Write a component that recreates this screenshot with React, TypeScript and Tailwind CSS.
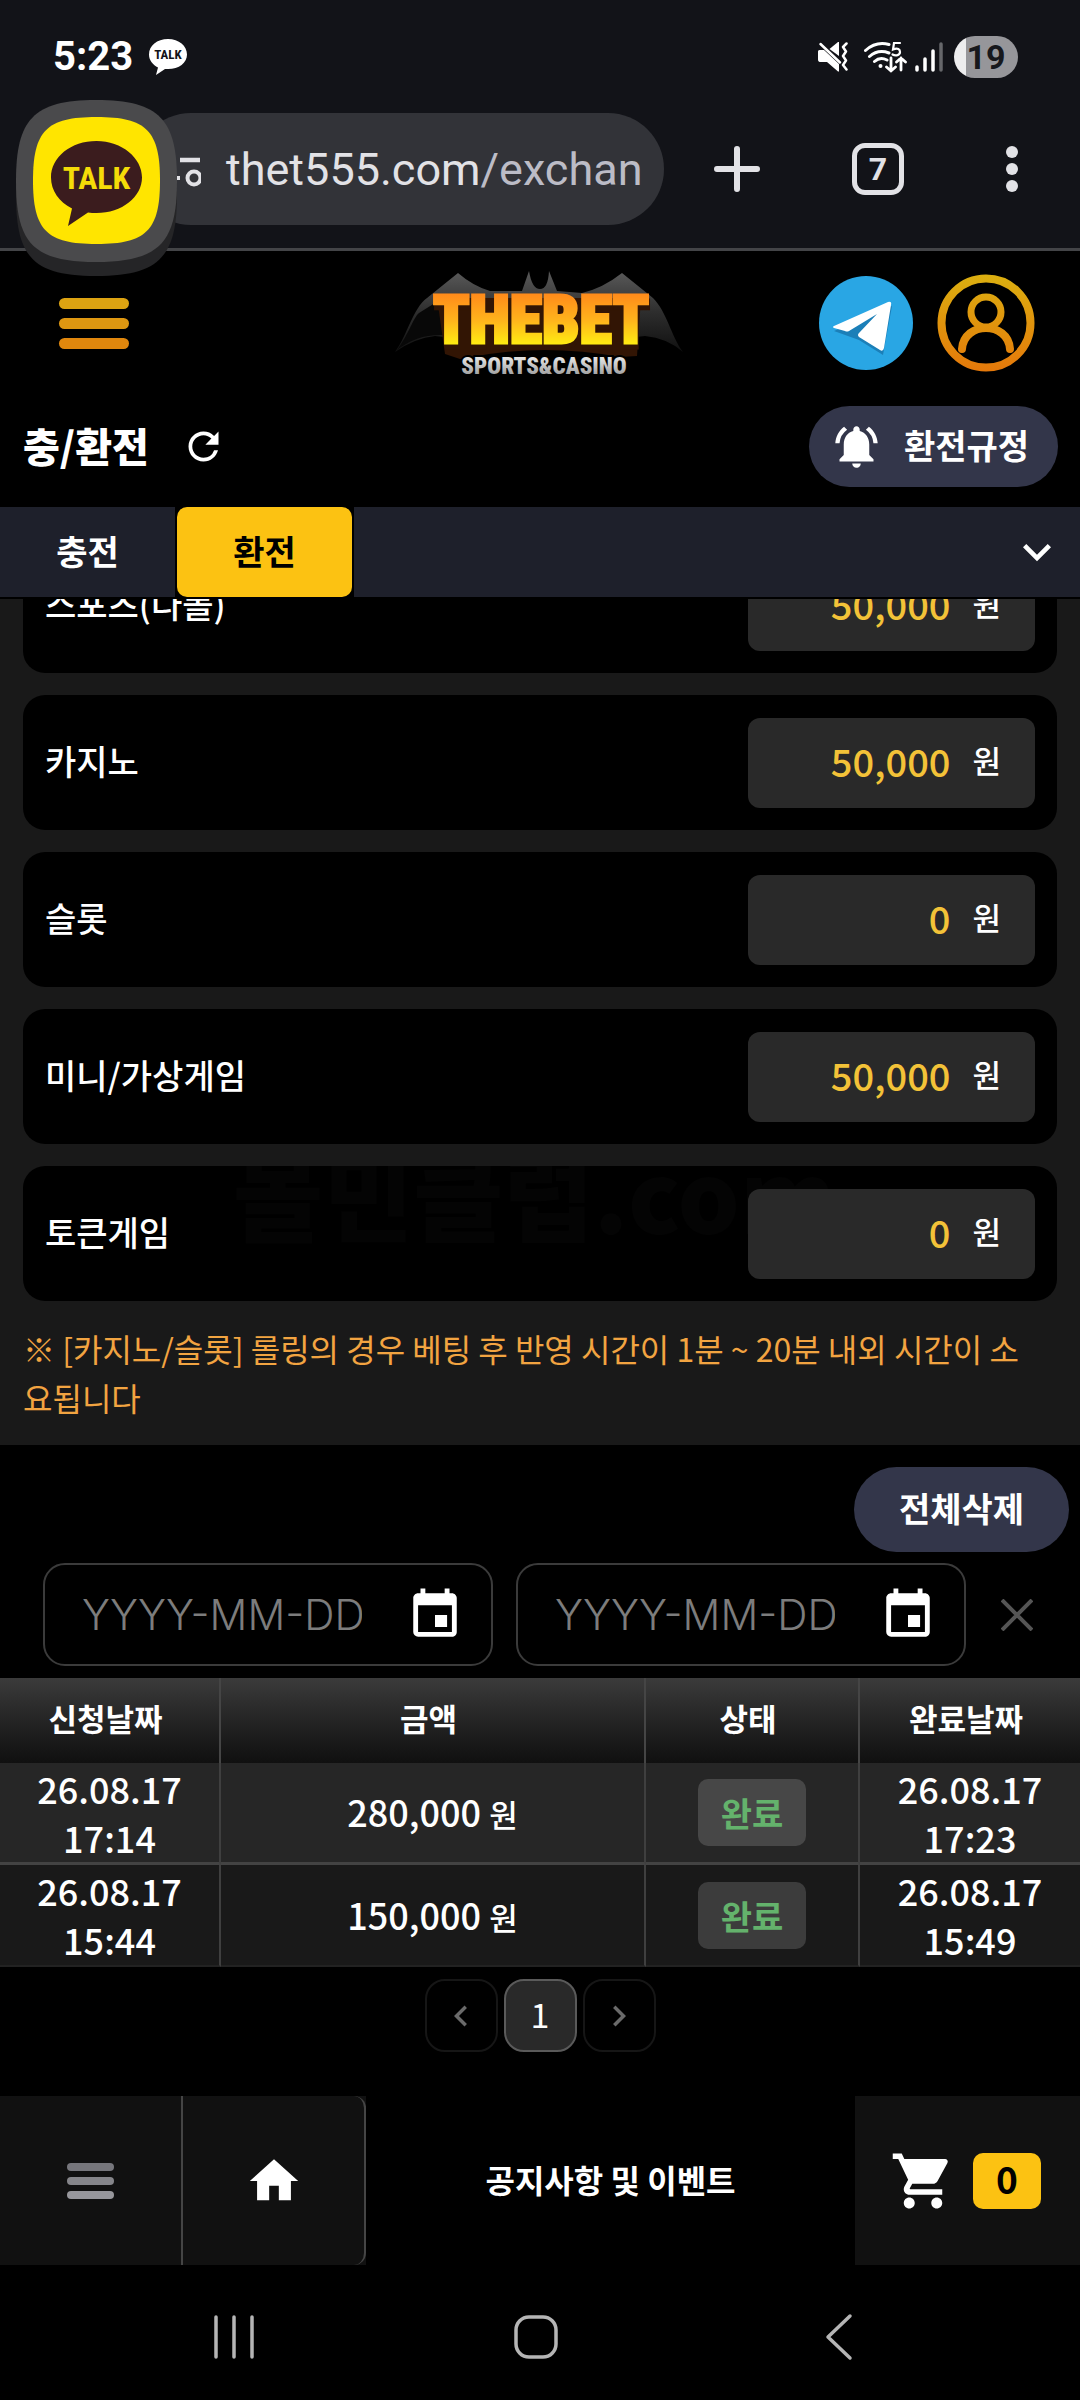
import {
  MdChevronLeft,
  MdChevronRight,
  MdEvent,
  MdExpandMore,
  MdHome,
  MdNotificationsActive,
  MdRefresh,
  MdShoppingCart,
} from "react-icons/md";

const rollings = [
  { label: "스포츠(다폴)", value: "50,000" },
  { label: "카지노", value: "50,000" },
  { label: "슬롯", value: "0" },
  { label: "미니/가상게임", value: "50,000" },
  { label: "토큰게임", value: "0", watermark: true },
];

const history = [
  { asked: ["26.08.17", "17:14"], amount: "280,000 원", state: "완료", done: ["26.08.17", "17:23"], row: "bg-[#262626]", badge: "bg-[#474747]", line: "border-b-3 border-[#434343]" },
  { asked: ["26.08.17", "15:44"], amount: "150,000 원", state: "완료", done: ["26.08.17", "15:49"], row: "bg-[#191919]", badge: "bg-[#3c3c3c]", line: "border-b-2 border-[#222222]" },
];

function StatusBar() {
  return (
    <div className="flex h-[113px] items-center pl-[53px] pr-[62px] font-[Roboto] text-white">
      <span className="text-[40px] font-bold leading-none">5:23</span>
      <svg className="ml-4 h-9 w-[38px]" viewBox="0 0 38 36" role="img" aria-label="KakaoTalk">
        <path d="M19 0C8 0 0 6.500 0 15.500c0 6 4 10.500 9 13L7 36l9-6h3c11 0 19-6 19-14.500S30 0 19 0Z" fill="#fff" />
        <text x="19" y="20" textAnchor="middle" fontFamily="'Roboto Condensed', Roboto, sans-serif" fontWeight="700" fontSize="13" fill="#121318">TALK</text>
      </svg>
      <div className="ml-auto flex items-center">
        <svg className="h-[30px] w-[30px]" viewBox="0 0 30 30" fill="none" aria-hidden="true">
          <path d="M0 9.500C0 8 1 8 3 8h3l15 14v7.500h-1L9 20H3c-2 0-3-.5-3-2.500Z" fill="#fff" />
          <path d="M20 0h1v14L11.500 7Z" fill="#fff" />
          <path d="M2.500 2 22 20.500" stroke="#fff" strokeWidth="2.500" strokeLinecap="round" />
          <path d="M28.500 1.500 25 5l3 4.500-3 4.500 3 4.500-3 4.500 3.500 4.500" stroke="#fff" strokeWidth="2.500" strokeLinecap="round" strokeLinejoin="round" />
        </svg>
        <svg className="ml-4 h-8 w-[43px]" viewBox="0 0 43 32" fill="none" stroke="#fff" strokeLinecap="round" aria-hidden="true">
          <path d="M1.500 9.500Q12 0 25 3.500M5.500 15.500Q14 8 25 12M10.500 20.500Q16 15.500 23 19" strokeWidth="3" />
          <circle cx="16.500" cy="25" r="2" fill="#fff" stroke="none" />
          <path d="M36 2h-6l-1 6.500c5-2 7 0 7 2.500 0 3-4 4.500-7.500 2.500" strokeWidth="2.200" />
          <path d="M27 17v13m-4.500-4 4.500 4 4.500-4M37 29V17m-4.500 4 4.500-4 4.500 4" strokeWidth="2.800" />
        </svg>
        <svg className="ml-2 h-[30px] w-7" viewBox="0 0 28 30" strokeWidth="3.500" strokeLinecap="round" aria-hidden="true">
          <path d="M2 25v3M10 17v11M18 9v19" stroke="#fff" />
          <path d="M26 2v26" stroke="#66676a" />
        </svg>
        <span className="ml-[11px] flex h-[42px] w-16 items-center justify-center rounded-full bg-linear-to-r from-[#ededee] from-18% to-[#96969a] to-18% text-[34px] font-bold leading-none text-[#17181c]">
          19
        </span>
      </div>
    </div>
  );
}

function KakaoBubble() {
  return (
    <button type="button" aria-label="카카오톡" className="absolute left-4 top-[100px] z-10">
      <svg className="h-[176px] w-[161px]" viewBox="0 0 161 176">
        <path d="M80 14C144 14 161 34 161 95s-17 81-81 81S0 156 0 95 17 14 80 14Z" fill="#252527" />
        <path d="M80 0c64 0 81 20 81 81s-17 81-81 81S0 142 0 81 17 0 80 0Z" fill="#4a4a4c" />
        <path d="M80.500 17c50 0 63.500 14 63.500 63.500S130.500 144 80.500 144 17 130 17 80.500 30.500 17 80.500 17Z" fill="#ffe500" />
        <path d="M80.500 41C55 41 35 57 35 77.500c0 13 8 24.500 21 31L52 126l20-13.500q4 .5 8.500.5C106 113 126 97 126 77.500S106 41 80.500 41Z" fill="#3b1c1e" />
        <text x="80.500" y="89" textAnchor="middle" fontFamily="'Roboto Condensed', Roboto, sans-serif" fontWeight="700" fontSize="32" fill="#f5dc08">TALK</text>
      </svg>
    </button>
  );
}

function BrowserBar() {
  return (
    <div className="flex items-center pb-[23px] pr-[62px] font-[Roboto] text-[#e2e2e6]">
      <a href="#address" className="ml-[135px] flex h-28 flex-1 items-center overflow-hidden rounded-full bg-[#323338] pl-[42px]">
        <svg className="h-9 w-6 shrink-0" viewBox="0 0 24 36" fill="none" stroke="#e2e2e6" aria-hidden="true">
          <path d="M3 9h20" strokeWidth="4.500" />
          <circle cx="17" cy="27" r="6.500" strokeWidth="4" />
          <path d="M0 27h3" strokeWidth="4" />
        </svg>
        <span className="ml-[25px] whitespace-nowrap text-[45px] leading-none">
          thet555.com<span className="text-[#bcbcc6]">/exchan</span>
        </span>
      </a>
      <button type="button" aria-label="새 탭" className="ml-[50px]">
        <svg className="h-[46px] w-[46px]" viewBox="0 0 46 46" stroke="#e2e2e6" strokeWidth="6" strokeLinecap="round">
          <path d="M3 23h40M23 3v40" />
        </svg>
      </button>
      <button type="button" aria-label="탭 7개" className="ml-[92px] flex h-[52px] w-[52px] items-center justify-center rounded-[13px] border-[5px] border-[#e2e2e6] text-[32px] font-bold leading-none">
        7
      </button>
      <button type="button" aria-label="메뉴" className="ml-[102px]">
        <svg className="h-12 w-3" viewBox="0 0 12 48" fill="#e2e2e6">
          <circle cx="6" cy="7" r="6" />
          <circle cx="6" cy="24" r="6" />
          <circle cx="6" cy="41" r="6" />
        </svg>
      </button>
    </div>
  );
}

function Logo() {
  return (
    <svg className="h-[110px] w-[290px]" viewBox="0 0 290 110" role="img" aria-label="THEBET SPORTS&CASINO">
      <defs>
        <linearGradient id="gold" x1="0" y1="0" x2="0" y2="1">
          <stop offset=".15" stopColor="#ff8a1a" />
          <stop offset=".5" stopColor="#ffb41c" />
          <stop offset=".8" stopColor="#ffea12" />
        </linearGradient>
        <linearGradient id="wing" x1="0" y1="0" x2="0" y2="1">
          <stop offset="0" stopColor="#5a5a5a" />
          <stop offset=".5" stopColor="#2e2e2e" />
          <stop offset="1" stopColor="#101010" />
        </linearGradient>
        <linearGradient id="steel" x1="0" y1="0" x2="0" y2="1">
          <stop offset=".2" stopColor="#e2e2e2" />
          <stop offset="1" stopColor="#8c8c8c" />
        </linearGradient>
      </defs>
      <path d="M0 84C12 68 18 40 32 30L63 5Q78 18 95 23h32l7-20q3 18 11 18t9-18l8 20 25 2Q208 20 227 5l31 25c14 14 18 38 30 54Q272 70 250 68L145 80 40 68Q20 70 0 84Z" fill="url(#wing)" />
      <path d="M2 82C14 66 18 50 24 45L48 30v37Q22 66 2 82Z" fill="#080808" />
      <path d="M42 30 246 30 242 88 225 89Q145 74 65 91L50 86Z" fill="#321504" />
      <g fontFamily="'Roboto Condensed', Roboto, sans-serif" fontWeight="900" textAnchor="middle">
        <text x="146" y="75" fontSize="66" fill="url(#gold)" stroke="url(#gold)" strokeWidth="3" className="drop-shadow-[1px_5px_0_#321504]">THEBET</text>
        <text x="149" y="106" fontSize="23" fill="url(#steel)" stroke="#000" strokeWidth="4" paintOrder="stroke">SPORTS&amp;CASINO</text>
      </g>
    </svg>
  );
}

function SiteHeader() {
  return (
    <header className="grid h-36 grid-cols-[1fr_auto_1fr] items-center px-[45px]">
      <button type="button" aria-label="전체 메뉴" className="ml-[14px] flex w-[70px] flex-col gap-[9px]">
        <span className="h-[11px] rounded-full bg-[#dca312]" />
        <span className="h-[11px] rounded-full bg-[#dd9711]" />
        <span className="h-[11px] rounded-full bg-[#e0870d]" />
      </button>
      <Logo />
      <div className="flex items-center justify-end gap-6">
        <a href="#telegram" aria-label="Telegram">
          <svg className="h-[94px] w-[94px]" viewBox="0 0 94 94">
            <circle cx="47" cy="47" r="47" fill="#29a6e4" />
            <path d="M15 55 73 30 64 79 40 64Z" fill="#1b7fb8" />
            <path d="M15 50 69 26q4-1 3 3l-7 43q-1 4-4 2L40 61q-2-2 0-4l18-19-28 17q-2 1-4 0l-11-3q-2-1 0-2Z" fill="#fff" />
          </svg>
        </a>
        <button type="button" aria-label="내 정보">
          <svg className="h-[98px] w-[98px]" viewBox="0 0 98 98" fill="none" stroke="url(#ring)">
            <defs>
              <linearGradient id="ring" gradientUnits="userSpaceOnUse" x1="0" y1="0" x2="0" y2="98">
                <stop stopColor="#dbb010" />
                <stop offset="1" stopColor="#e5780a" />
              </linearGradient>
            </defs>
            <circle cx="49" cy="49" r="44.500" strokeWidth="8" />
            <circle cx="49" cy="38" r="15" strokeWidth="7" />
            <path d="M25 75C27 47 71 47 73 75" strokeWidth="8" strokeLinecap="round" />
          </svg>
        </button>
      </div>
    </header>
  );
}

function DateField({ label }: { label: string }) {
  return (
    <div className="flex h-[103px] flex-1 items-center justify-between rounded-[22px] border-2 border-[#3b3b3b] pl-[37px] pr-[27px]">
      <input
        type="text"
        aria-label={label}
        placeholder="YYYY-MM-DD"
        className="w-[280px] bg-transparent font-[Inter] text-[42px] font-light text-white outline-none placeholder:text-[#7c7c7c]"
      />
      <button type="button" aria-label={`${label} 선택`}>
        <MdEvent className="h-[58px] w-[58px] text-white" />
      </button>
    </div>
  );
}

function DateCell({ lines, className }: { lines: string[]; className: string }) {
  return (
    <td className={className}>
      {lines[0]}
      <br />
      {lines[1]}
    </td>
  );
}

function HistoryTable() {
  const head = "h-[85px] border-[#454545] pb-1 pr-2 text-[31px] font-bold";
  return (
    <table className="mt-3 w-full table-fixed border-separate border-spacing-0 text-center">
      <colgroup>
        <col className="w-[221px]" />
        <col />
        <col className="w-[214px]" />
        <col className="w-[220px]" />
      </colgroup>
      <thead className="bg-linear-to-b from-[#3b3b3b] to-[#101010]">
        <tr>
          <th className={`${head} border-r-2`}>신청날짜</th>
          <th className={`${head} border-r-2`}>금액</th>
          <th className={`${head} border-r-2`}>상태</th>
          <th className={head}>완료날짜</th>
        </tr>
      </thead>
      <tbody className="text-[36px] font-medium leading-[49px]">
        {history.map((h) => {
          const cell = `h-[102px] border-r-2 border-r-[#3f3f3f] ${h.line}`;
          return (
            <tr key={h.asked[1]} className={h.row}>
              <DateCell lines={h.asked} className={cell} />
              <td className={cell}>
                {h.amount.split(" ")[0]} <span className="text-[31px]">원</span>
              </td>
              <td className={cell}>
                <span className={`inline-block rounded-[10px] px-[23px] py-[9px] align-middle text-[34px] font-bold text-[#64b26c] ${h.badge}`}>{h.state}</span>
              </td>
              <DateCell lines={h.done} className={`h-[102px] ${h.line}`} />
            </tr>
          );
        })}
      </tbody>
    </table>
  );
}

export default function App() {
  return (
    <div className="relative min-h-screen bg-black font-['Noto_Sans_CJK_KR',sans-serif] text-white">
      <div className="border-b-3 border-[#434447] bg-[#121318]">
        <StatusBar />
        <BrowserBar />
      </div>
      <KakaoBubble />

      <SiteHeader />

      <div className="flex items-center pb-5 pl-[23px] pr-[22px] pt-[11px]">
        <h1 className="pb-1 text-[40px] font-black leading-none">충/환전</h1>
        <button type="button" aria-label="새로고침" className="ml-8">
          <MdRefresh className="h-[45px] w-[45px]" />
        </button>
        <button type="button" className="ml-auto flex h-[81px] items-center rounded-full bg-[#33364a] pl-[22px] pr-[29px] text-[34px] font-bold">
          <MdNotificationsActive className="mr-[22px] h-[51px] w-[51px]" />
          <span className="pb-1">환전규정</span>
        </button>
      </div>

      <nav className="flex h-[92px] items-stretch border-b-2 border-black bg-[#1e202b] text-[34px] font-bold">
        <a href="#deposit" className="flex w-[175px] items-center justify-center pb-1">충전</a>
        <span className="bg-black px-[2px]">
          <a href="#withdraw" aria-current="page" className="flex h-full w-[175px] items-center justify-center rounded-[10px] bg-[#fcc212] pb-1 text-black">환전</a>
        </span>
        <button type="button" aria-label="펼치기" className="ml-auto mr-[15px]">
          <MdExpandMore className="h-14 w-14" />
        </button>
      </nav>

      <section className="overflow-hidden bg-[#191919] px-[23px] pb-[23px]">
        <ul className="-mt-[61px] flex flex-col gap-[22px]">
          {rollings.map((r) => (
            <li key={r.label} className="relative flex h-[135px] items-center justify-between overflow-hidden rounded-[22px] bg-black px-[22px]">
              {r.watermark && (
                <span aria-hidden="true" className="absolute left-[210px] -top-6 text-[98px] font-black leading-none text-[#040404]">
                  몰민클럽.com
                </span>
              )}
              <span className="relative pb-1 text-[34px] font-medium">{r.label}</span>
              <span className="relative flex h-[90px] w-[287px] items-center justify-end rounded-[12px] bg-[#292929] pb-1 pr-[34px]">
                <span className="text-[38px] font-medium text-[#f3c238]">{r.value}</span>
                <span className="ml-[22px] text-[31px] font-medium">원</span>
              </span>
            </li>
          ))}
        </ul>
        <p className="mt-[23px] break-all pr-4 text-[32px] leading-[49px] text-[#f2a441]">
          ※ [카지노/슬롯] 롤링의 경우 베팅 후 반영 시간이 1분 ~ 20분 내외 시간이 소요됩니다
        </p>
      </section>

      <section className="pt-[22px]">
        <div className="flex justify-end pr-[11px]">
          <button type="button" className="h-[85px] rounded-full bg-[#33364a] px-[45px] pb-1 text-[34px] font-bold">전체삭제</button>
        </div>
        <div className="mt-[11px] flex items-center pl-[43px] pr-[47px]">
          <div className="flex flex-1 gap-[23px]">
            <DateField label="시작일" />
            <DateField label="종료일" />
          </div>
          <button type="button" aria-label="날짜 지우기" className="ml-[35px]">
            <svg className="h-8 w-8" viewBox="0 0 32 32" stroke="#555" strokeWidth="4">
              <path d="M1 1l30 30M31 1 1 31" />
            </svg>
          </button>
        </div>
        <HistoryTable />
        <div className="flex justify-center gap-[6px] pb-11 pt-3 text-[34px]">
          <button type="button" aria-label="이전" className="flex h-[73px] w-[73px] items-center justify-center rounded-[20px] border-2 border-[#161616] text-[#6a6a6a]">
            <MdChevronLeft className="h-[42px] w-[42px]" />
          </button>
          <button type="button" aria-current="page" className="flex h-[73px] w-[73px] items-center justify-center rounded-[20px] border-2 border-[#5a5a5a] bg-[#292929] pb-1">1</button>
          <button type="button" aria-label="다음" className="flex h-[73px] w-[73px] items-center justify-center rounded-[20px] border-2 border-[#161616] text-[#6a6a6a]">
            <MdChevronRight className="h-[42px] w-[42px]" />
          </button>
        </div>
      </section>

      <nav className="flex h-[169px] items-stretch">
        <button type="button" aria-label="메뉴" className="flex w-[183px] flex-col items-center justify-center gap-[6px] border-r-2 border-[#454545] bg-[#111111]">
          <span className="h-2 w-[47px] rounded-full bg-[#76767c]" />
          <span className="h-2 w-[47px] rounded-full bg-[#85858a]" />
          <span className="h-2 w-[47px] rounded-full bg-[#97979c]" />
        </button>
        <span className="flex w-[183px] bg-[#111111]">
          <a href="#home" aria-label="홈" className="flex flex-1 items-center justify-center rounded-r-[12px] border-r-2 border-[#454545]">
            <MdHome className="h-[58px] w-[58px]" />
          </a>
        </span>
        <a href="#notice" className="flex flex-1 items-center justify-center pb-1 text-[32px] font-bold">공지사항 및 이벤트</a>
        <button type="button" aria-label="장바구니 0" className="flex w-[225px] items-center gap-[17px] bg-[#111111] pl-[35px]">
          <MdShoppingCart className="h-[66px] w-[66px]" />
          <span className="flex h-14 w-[68px] items-center justify-center rounded-[10px] bg-[#fcc212] pb-1 text-[37px] font-bold text-black">0</span>
        </button>
      </nav>

      <nav className="flex h-[135px] items-start pb-6 pl-[83px] pr-[90px] pt-12" aria-label="시스템">
        <button type="button" aria-label="최근 앱" className="flex flex-1 justify-center">
          <svg className="h-12 w-11" viewBox="0 0 44 48" stroke="#b5b5b5" strokeWidth="3.500" strokeLinecap="round">
            <path d="M4 4v40M22 4v40M40 4v40" />
          </svg>
        </button>
        <button type="button" aria-label="홈 화면" className="flex flex-1 justify-center">
          <svg className="h-12 w-12" viewBox="0 0 48 48" fill="none" stroke="#b5b5b5" strokeWidth="3.500">
            <rect x="4" y="4" width="40" height="40" rx="13" />
          </svg>
        </button>
        <button type="button" aria-label="뒤로" className="flex flex-1 justify-center">
          <svg className="h-12 w-7" viewBox="0 0 28 48" fill="none" stroke="#b5b5b5" strokeWidth="3.500" strokeLinecap="round" strokeLinejoin="round">
            <path d="M25 3 3 24l22 21" />
          </svg>
        </button>
      </nav>
    </div>
  );
}
